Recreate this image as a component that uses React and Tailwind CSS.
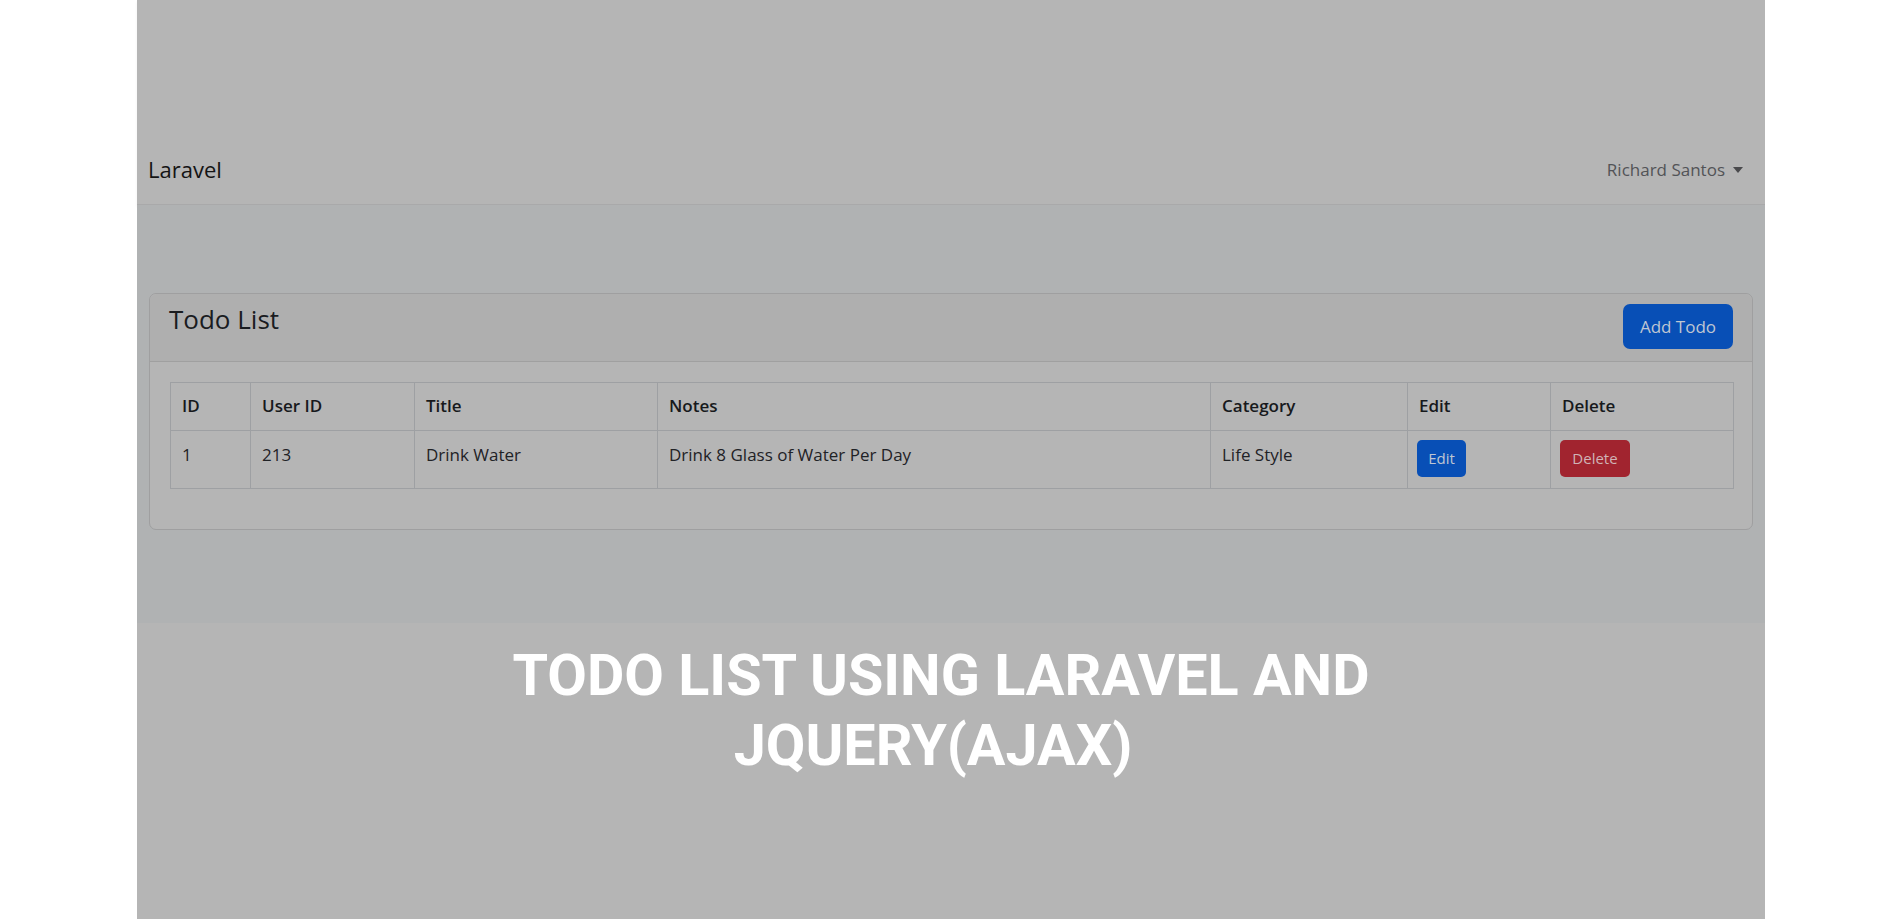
// App.jsx — dimmed Laravel todo list screenshot with a banner title
const todos = [
  { id: 1, userId: 213, title: "Drink Water", notes: "Drink 8 Glass of Water Per Day", category: "Life Style" },
];

const columns = [
  { label: "ID", width: "w-[80px]" },
  { label: "User ID", width: "w-[164px]" },
  { label: "Title", width: "w-[243px]" },
  { label: "Notes", width: "w-[553px]" },
  { label: "Category", width: "w-[197px]" },
  { label: "Edit", width: "w-[143px]" },
  { label: "Delete", width: "w-[183px]" },
];

const App = () => {
  return (
    <div className="flex h-[919px] w-full overflow-hidden bg-white font-['Open_Sans',sans-serif]">
      <div className="ml-[137px] flex w-[1628px] flex-col bg-[#b5b5b5]">
        {/* Navbar */}
        <nav className="border-b border-[#a9a9aa] bg-[#b5b5b5] px-[11px] pb-[18px] pt-[153px] shadow-[0_2px_3px_rgba(0,0,0,0.06)]">
          <div className="flex h-[33px] items-center justify-between">
            <span className="text-[22px] leading-[33px] text-[#141414]">Laravel</span>
            <div className="mr-[11px] flex items-center text-[17px] text-[#525357]">
              Richard Santos
              <span className="ml-[8px] mt-[1px] h-0 w-0 border-x-[5px] border-t-[6px] border-x-transparent border-t-[#4a4a4d]" />
            </div>
          </div>
        </nav>

        {/* Page body */}
        <main className="h-[418px] bg-[#b0b2b3] px-[12px] pt-[88px]">
          <div className="rounded-[7px] border border-[#9f9fa0] bg-[#b5b5b5]">
            {/* Card header */}
            <div className="flex items-start justify-between rounded-t-[7px] border-b border-[#a0a0a0] bg-[#afafaf] px-[19px] pb-[12px] pt-[9px]">
              <h3 className="text-[26px] leading-[32px] text-[#1a1c1f]">Todo List</h3>
              <button className="mt-[1px] h-[45px] w-[110px] rounded-[7px] bg-[#084fb6] text-[17px] text-[#bfc6d2]">
                Add Todo
              </button>
            </div>

            {/* Card body */}
            <div className="p-[20px]">
              <table className="mb-[20px] w-[1563px] table-fixed border-collapse text-left text-[17px] text-[#1f2226]">
                <thead>
                  <tr>
                    {columns.map((col) => (
                      <th
                        key={col.label}
                        className={`${col.width} border border-[#9ea0a3] px-[11px] pb-[10px] pt-[9px] align-top font-semibold leading-[28px] text-[#17191c]`}
                      >
                        {col.label}
                      </th>
                    ))}
                  </tr>
                </thead>
                <tbody>
                  {todos.map((todo) => (
                    <tr key={todo.id}>
                      <td className="h-[58px] border border-[#9ea0a3] px-[11px] pt-[10px] align-top leading-[28px]">{todo.id}</td>
                      <td className="border border-[#9ea0a3] px-[11px] pt-[10px] align-top leading-[28px]">{todo.userId}</td>
                      <td className="border border-[#9ea0a3] px-[11px] pt-[10px] align-top leading-[28px]">{todo.title}</td>
                      <td className="border border-[#9ea0a3] px-[11px] pt-[10px] align-top leading-[28px]">{todo.notes}</td>
                      <td className="border border-[#9ea0a3] px-[11px] pt-[10px] align-top leading-[28px]">{todo.category}</td>
                      <td className="border border-[#9ea0a3] px-[9px] pt-[9px] align-top">
                        <button className="h-[37px] w-[49px] rounded-[5px] bg-[#084fb6] text-[15px] text-[#bfc6d2]">
                          Edit
                        </button>
                      </td>
                      <td className="border border-[#9ea0a3] px-[9px] pt-[9px] align-top">
                        <button className="h-[37px] w-[70px] rounded-[5px] bg-[#a1242f] text-[15px] text-[#d0b3b6]">
                          Delete
                        </button>
                      </td>
                    </tr>
                  ))}
                </tbody>
              </table>
            </div>
          </div>
        </main>

        {/* Banner title */}
        <section className="flex flex-1 flex-col items-center bg-[#b5b5b5] pr-[20px] pt-[18px]">
          <h1 className="flex flex-col items-center font-['Roboto',sans-serif] text-[57.5px] font-bold leading-[70px] text-white">
            <span>TODO LIST USING LARAVEL AND</span>
            <span className="mr-[16px]">JQUERY(AJAX)</span>
          </h1>
        </section>
      </div>
      <div className="flex-1 bg-white" />
    </div>
  );
};

export default App;
